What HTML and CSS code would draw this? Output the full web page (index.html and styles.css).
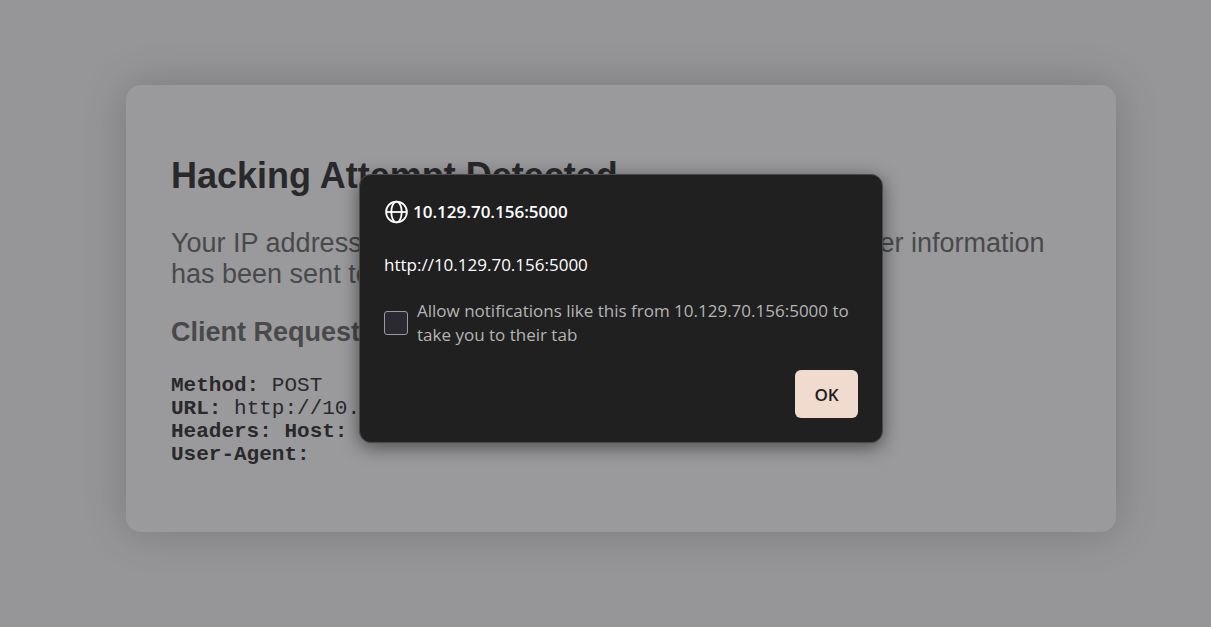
FILE: index.html
```html
<!DOCTYPE html>
<html lang="en">
<head>
<meta charset="utf-8">
<meta name="viewport" content="width=device-width, initial-scale=1">
<title>Hacking Attempt Detected</title>
<link rel="stylesheet" href="styles.css">
</head>
<body>
<div class="page">
  <main class="card">
    <h1 class="title">Hacking Attempt Detected</h1>
    <p class="message">Your IP address has been flagged, a report with your browser information has been sent to the administrators for investigation.</p>
    <h2 class="subtitle">Client Request Information:</h2>
    <pre class="request"><strong>Method:</strong> POST
<strong>URL:</strong> http://10.129.70.156:5000/support
<strong>Headers:</strong> <strong>Host:</strong> 10.129.70.156:5000
<strong>User-Agent:</strong></pre>
  </main>
  <dialog class="alert" open aria-labelledby="alert-origin">
    <header class="alert-header">
      <svg class="globe" viewBox="0 0 24 24" fill="none" stroke="currentColor" stroke-width="1.8" aria-hidden="true">
        <circle cx="12.5" cy="12" r="10.4"/>
        <ellipse cx="12.5" cy="12" rx="5.2" ry="10.4"/>
        <path d="M2.1 12h20.8"/>
      </svg>
      <strong id="alert-origin">10.129.70.156:5000</strong>
    </header>
    <p class="alert-text">http://10.129.70.156:5000</p>
    <div class="option">
      <input class="checkbox" type="checkbox" id="allow">
      <label for="allow">Allow notifications like this from 10.129.70.156:5000 to take you to their tab</label>
    </div>
    <form class="actions" method="dialog">
      <button class="ok">OK</button>
    </form>
  </dialog>
</div>
</body>
</html>
```
FILE: styles.css
```css
* {
  box-sizing: border-box;
}

body {
  margin: 0;
  min-height: 100vh;
  background: #969698;
  font-family: "Liberation Sans", Arial, sans-serif;
}

.page {
  position: relative;
  display: flex;
  align-items: center;
  justify-content: center;
  min-height: 100vh;
  margin-left: 31px;
  padding: 0 20px 10px;
}

.card {
  width: 100%;
  max-width: 990px;
  padding: 70px 45px 66px;
  border-radius: 15px;
  background: #9a9a9c;
  box-shadow: 0 0 45px rgba(0, 0, 0, 0.2);
}

.title {
  margin: 0;
  color: #29292c;
  font-size: 36px;
  line-height: 41px;
}

.message {
  margin: 32px 0 27px;
  color: #49494b;
  font-size: 27px;
  line-height: 31px;
}

.subtitle {
  margin: 0;
  color: #49494b;
  font-size: 27px;
  line-height: 31px;
}

.request {
  margin: 26px 0 0;
  color: #29292c;
  font-family: "Liberation Mono", "Courier New", monospace;
  font-size: 21px;
  line-height: 23px;
}

.alert {
  position: absolute;
  top: 174px;
  left: 0;
  right: 0;
  width: 524px;
  max-width: 100%;
  margin: 0 auto;
  padding: 25px 24px 24px;
  border: 1px solid #4b4b4b;
  border-radius: 12px;
  background: #202020;
  box-shadow: 0 4px 18px rgba(0, 0, 0, 0.5);
  color: #fff;
  font-family: "Open Sans", "Noto Sans", sans-serif;
  font-size: 17px;
  line-height: 24px;
}

.alert-header {
  display: flex;
  align-items: center;
  gap: 5px;
}

.alert-header strong {
  font-weight: 600;
}

.globe {
  width: 24px;
  height: 24px;
}

.alert-text {
  margin: 29px 0 22px;
}

.option {
  display: flex;
  align-items: center;
  gap: 9px;
  color: #b4b4b4;
}

.checkbox {
  flex: none;
  appearance: none;
  width: 24px;
  height: 24px;
  margin: 0;
  border: 1px solid #9a97a6;
  border-radius: 3px;
  background: #2b2a33;
}

.checkbox:checked {
  background: #f0dbce;
}

.actions {
  display: flex;
  justify-content: flex-end;
  margin-top: 23px;
}

.ok {
  width: 63px;
  height: 48px;
  padding: 0;
  border: 0;
  border-radius: 6px;
  background: #f0dbce;
  color: #202020;
  font: 600 17px "Open Sans", "Noto Sans", sans-serif;
}
```
